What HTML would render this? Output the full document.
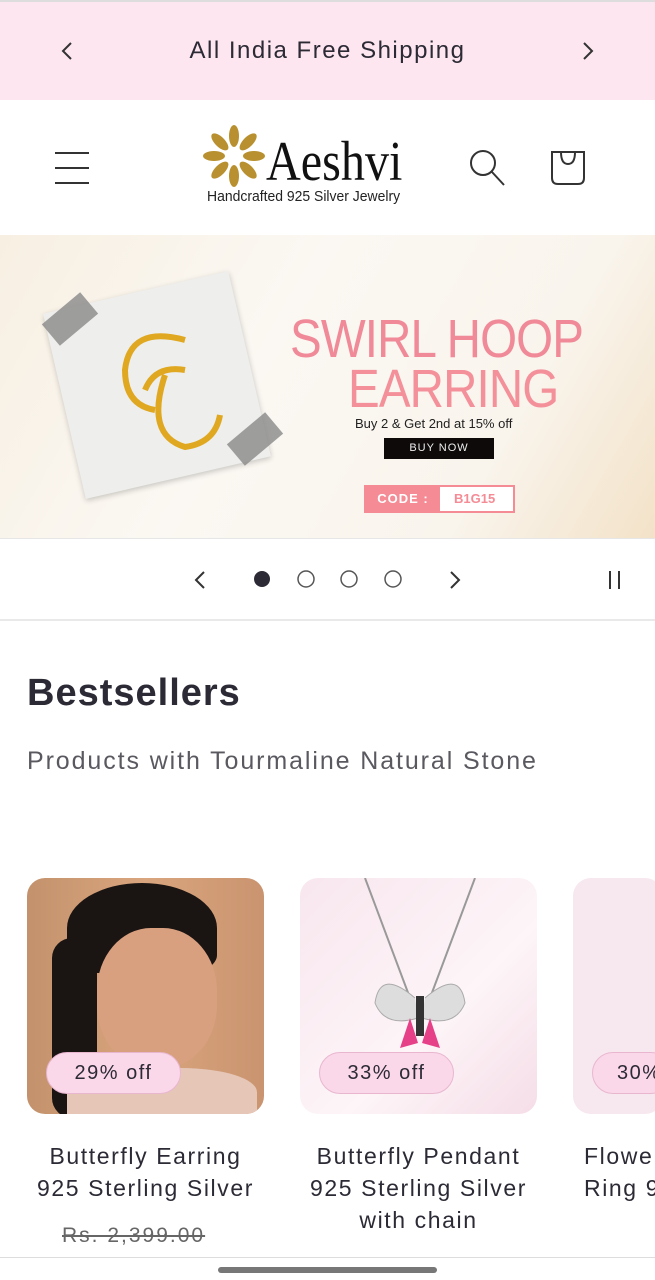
<!DOCTYPE html>
<html><head><meta charset="utf-8"><style>
*{margin:0;padding:0;box-sizing:border-box}
body{width:655px;height:1280px;overflow:hidden;background:#fff;font-family:"Liberation Sans",sans-serif;color:#2b2a35;position:relative}
.ann{position:absolute;top:2px;left:0;width:655px;height:98px;background:#fde6f0;display:flex;align-items:center;justify-content:center;font-size:24px;letter-spacing:1.5px;color:#2b2a35}
.abs{position:absolute}
.card{position:absolute;top:878px;width:237px;height:236px;border-radius:18px;overflow:hidden}
.badge{position:absolute;top:1052px;height:42px;border-radius:21px;background:#fbd7ea;border:1px solid #e8b7cf;font-size:20px;letter-spacing:1.5px;display:flex;align-items:center;justify-content:center}
.pt{position:absolute;top:1140px;width:237px;text-align:center;font-size:23px;line-height:32px;letter-spacing:1.6px;color:#2b2a35}
</style></head><body>
<div style="position:absolute;top:0;left:0;width:655px;height:2px;background:#ddd"></div>
<div class="ann">All India Free Shipping</div>
<svg class="abs" style="left:60px;top:41px" width="14" height="20"><path d="M11 2L3 10l8 8" fill="none" stroke="#333" stroke-width="2"/></svg>
<svg class="abs" style="left:581px;top:41px" width="14" height="20"><path d="M3 2l8 8-8 8" fill="none" stroke="#333" stroke-width="2"/></svg>
<svg class="abs" style="left:55px;top:150px" width="36" height="36"><path d="M0 3h34M0 18h34M0 33h34" stroke="#333" stroke-width="2"/></svg>
<svg class="abs" style="left:200px;top:122px" width="70" height="70"><g fill="#b8902f" transform="translate(34,34)">
<ellipse cx="0" cy="-20" rx="5" ry="11"/><ellipse cx="0" cy="-20" rx="5" ry="11" transform="rotate(45)"/><ellipse cx="0" cy="-20" rx="5" ry="11" transform="rotate(90)"/><ellipse cx="0" cy="-20" rx="5" ry="11" transform="rotate(135)"/><ellipse cx="0" cy="-20" rx="5" ry="11" transform="rotate(180)"/><ellipse cx="0" cy="-20" rx="5" ry="11" transform="rotate(225)"/><ellipse cx="0" cy="-20" rx="5" ry="11" transform="rotate(270)"/><ellipse cx="0" cy="-20" rx="5" ry="11" transform="rotate(315)"/></g></svg>
<div class="abs" style="left:266px;top:132px;font-family:'Liberation Serif',serif;font-size:56px;line-height:60px;color:#111;transform:scaleX(0.86);transform-origin:left">Aeshvi</div>
<div class="abs" style="left:207px;top:188px;font-family:'Liberation Sans Narrow','Liberation Sans',sans-serif;font-size:15px;color:#222;transform:scaleX(.93);transform-origin:left">Handcrafted 925 Silver Jewelry</div>
<svg class="abs" style="left:468px;top:148px" width="38" height="40"><circle cx="15" cy="15" r="12" fill="none" stroke="#333" stroke-width="2"/><path d="M24 24l12 13" stroke="#333" stroke-width="2"/></svg>
<svg class="abs" style="left:548px;top:148px" width="40" height="40"><path d="M4 4h32v26q0 6-6 6H10q-6 0-6-6z" fill="none" stroke="#333" stroke-width="2"/><path d="M13 4q0 12 7 12t7-12" fill="none" stroke="#333" stroke-width="2"/></svg>
<div class="abs" style="left:0;top:235px;width:655px;height:303px;background:linear-gradient(120deg,#f7efe2,#fbf8f3 40%,#f9f4ec 75%,#f3e2c8)">
<div class="abs" style="left:62px;top:55px;width:190px;height:190px;background:#eeeeec;transform:rotate(-13deg);box-shadow:0 2px 6px rgba(0,0,0,.2)"></div>
<div class="abs" style="left:45px;top:70px;width:50px;height:28px;background:#888;opacity:.8;transform:rotate(-40deg)"></div>
<div class="abs" style="left:230px;top:190px;width:50px;height:28px;background:#888;opacity:.8;transform:rotate(-40deg)"></div>
<svg class="abs" style="left:110px;top:90px" width="120" height="130"><path d="M75 15Q20 0 15 45Q15 80 45 85M35 65Q45 40 75 45" fill="none" stroke="#e0a820" stroke-width="6"/><path d="M55 50Q35 110 75 122Q105 118 110 90" fill="none" stroke="#e0a820" stroke-width="6"/></svg>
<div class="abs" style="left:290px;top:78px;font-size:54px;line-height:52px;color:#f08a98;letter-spacing:-1px;transform:scaleX(.88);transform-origin:left">SWIRL HOOP</div>
<div class="abs" style="left:348px;top:128px;font-size:54px;line-height:52px;color:#f4909a;letter-spacing:-1px;transform:scaleX(.88);transform-origin:left">EARRING</div>
<div class="abs" style="left:355px;top:181px;font-size:13px;color:#222">Buy 2 &amp; Get 2nd at 15% off</div>
<div class="abs" style="left:384px;top:203px;width:110px;height:21px;background:#0e0a0a;color:#eee;font-size:11px;letter-spacing:1px;text-align:center;line-height:21px">BUY NOW</div>
<div class="abs" style="left:364px;top:250px;width:151px;height:28px;border:2px solid #f58b95;background:#fff;font-size:13px;font-weight:bold;line-height:24px"><span style="display:inline-block;width:74px;background:#f58b95;color:#fff;text-align:center;letter-spacing:1px">CODE :</span><span style="color:#f58b95;margin-left:14px">B1G15</span></div>
</div>
<div class="abs" style="left:0;top:538px;width:655px;height:1px;background:#e6e6e6"></div>
<svg class="abs" style="left:193px;top:570px" width="14" height="20"><path d="M11 2L3 10l8 8" fill="none" stroke="#333" stroke-width="2"/></svg>
<svg class="abs" style="left:250px;top:568px" width="160" height="24"><circle cx="12" cy="11" r="8" fill="#2b2a35"/><circle cx="56" cy="11" r="8" fill="none" stroke="#555" stroke-width="1.5"/><circle cx="99" cy="11" r="8" fill="none" stroke="#555" stroke-width="1.5"/><circle cx="143" cy="11" r="8" fill="none" stroke="#555" stroke-width="1.5"/></svg>
<svg class="abs" style="left:448px;top:570px" width="14" height="20"><path d="M3 2l8 8-8 8" fill="none" stroke="#333" stroke-width="2"/></svg>
<svg class="abs" style="left:607px;top:570px" width="16" height="20"><path d="M3 1v18M12 1v18" stroke="#333" stroke-width="2"/></svg>
<div class="abs" style="left:0;top:619px;width:655px;height:2px;background:#e9e9e9"></div>
<div class="abs" style="left:27px;top:672px;font-size:38px;font-weight:bold;letter-spacing:1px">Bestsellers</div>
<div class="abs" style="left:27px;top:747px;font-size:25px;letter-spacing:1.9px;color:#5a5960">Products with Tourmaline Natural Stone</div>
<div class="card" style="left:27px;background:linear-gradient(90deg,#c3926c,#d9a57e 50%,#c9946f)">
<div class="abs" style="left:40px;top:5px;width:150px;height:90px;border-radius:50% 50% 20% 20%;background:#1a1412"></div>
<div class="abs" style="left:25px;top:60px;width:45px;height:180px;background:#1a1412;border-radius:20px"></div>
<div class="abs" style="left:70px;top:50px;width:120px;height:140px;border-radius:45%;background:#d9a080"></div>
<div class="abs" style="left:40px;top:190px;width:190px;height:60px;background:#e5c6b7;border-radius:40% 40% 0 0"></div>
</div>
<div class="card" style="left:300px;background:linear-gradient(135deg,#f8e6ee,#fdf5f8 60%,#f5dde7)">
<svg class="abs" style="left:60px;top:0" width="120" height="180"><path d="M5 0L50 120M115 0L70 120" stroke="#999" stroke-width="2"/><path d="M55 120Q20 90 15 125Q25 150 58 140M65 120Q100 90 105 125Q95 150 62 140" fill="#ddd" stroke="#aaa"/><path d="M50 140L40 170L58 165ZM70 140L80 170L62 165Z" fill="#e64088"/><rect x="56" y="118" width="8" height="40" fill="#333"/></svg>
</div>
<div class="card" style="left:573px;width:90px;background:#f7e7ee"></div>
<div class="badge" style="left:46px;width:135px">29% off</div>
<div class="badge" style="left:319px;width:135px">33% off</div>
<div class="badge" style="left:592px;width:80px;justify-content:flex-start;padding-left:24px">30%</div>
<div class="pt" style="left:27px">Butterfly Earring<br>925 Sterling Silver</div>
<div class="pt" style="left:300px">Butterfly Pendant<br>925 Sterling Silver<br>with chain</div>
<div class="pt" style="left:584px;text-align:left;width:100px">Flowe<br>Ring 9</div>
<div class="abs" style="left:62px;top:1224px;font-size:21px;letter-spacing:2px;color:#666;text-decoration:line-through">Rs. 2,399.00</div>
<div class="abs" style="left:0;top:1257px;width:655px;height:1px;background:#ddd"></div>
<div class="abs" style="left:218px;top:1267px;width:219px;height:6px;border-radius:3px;background:#777"></div>
</body></html>
